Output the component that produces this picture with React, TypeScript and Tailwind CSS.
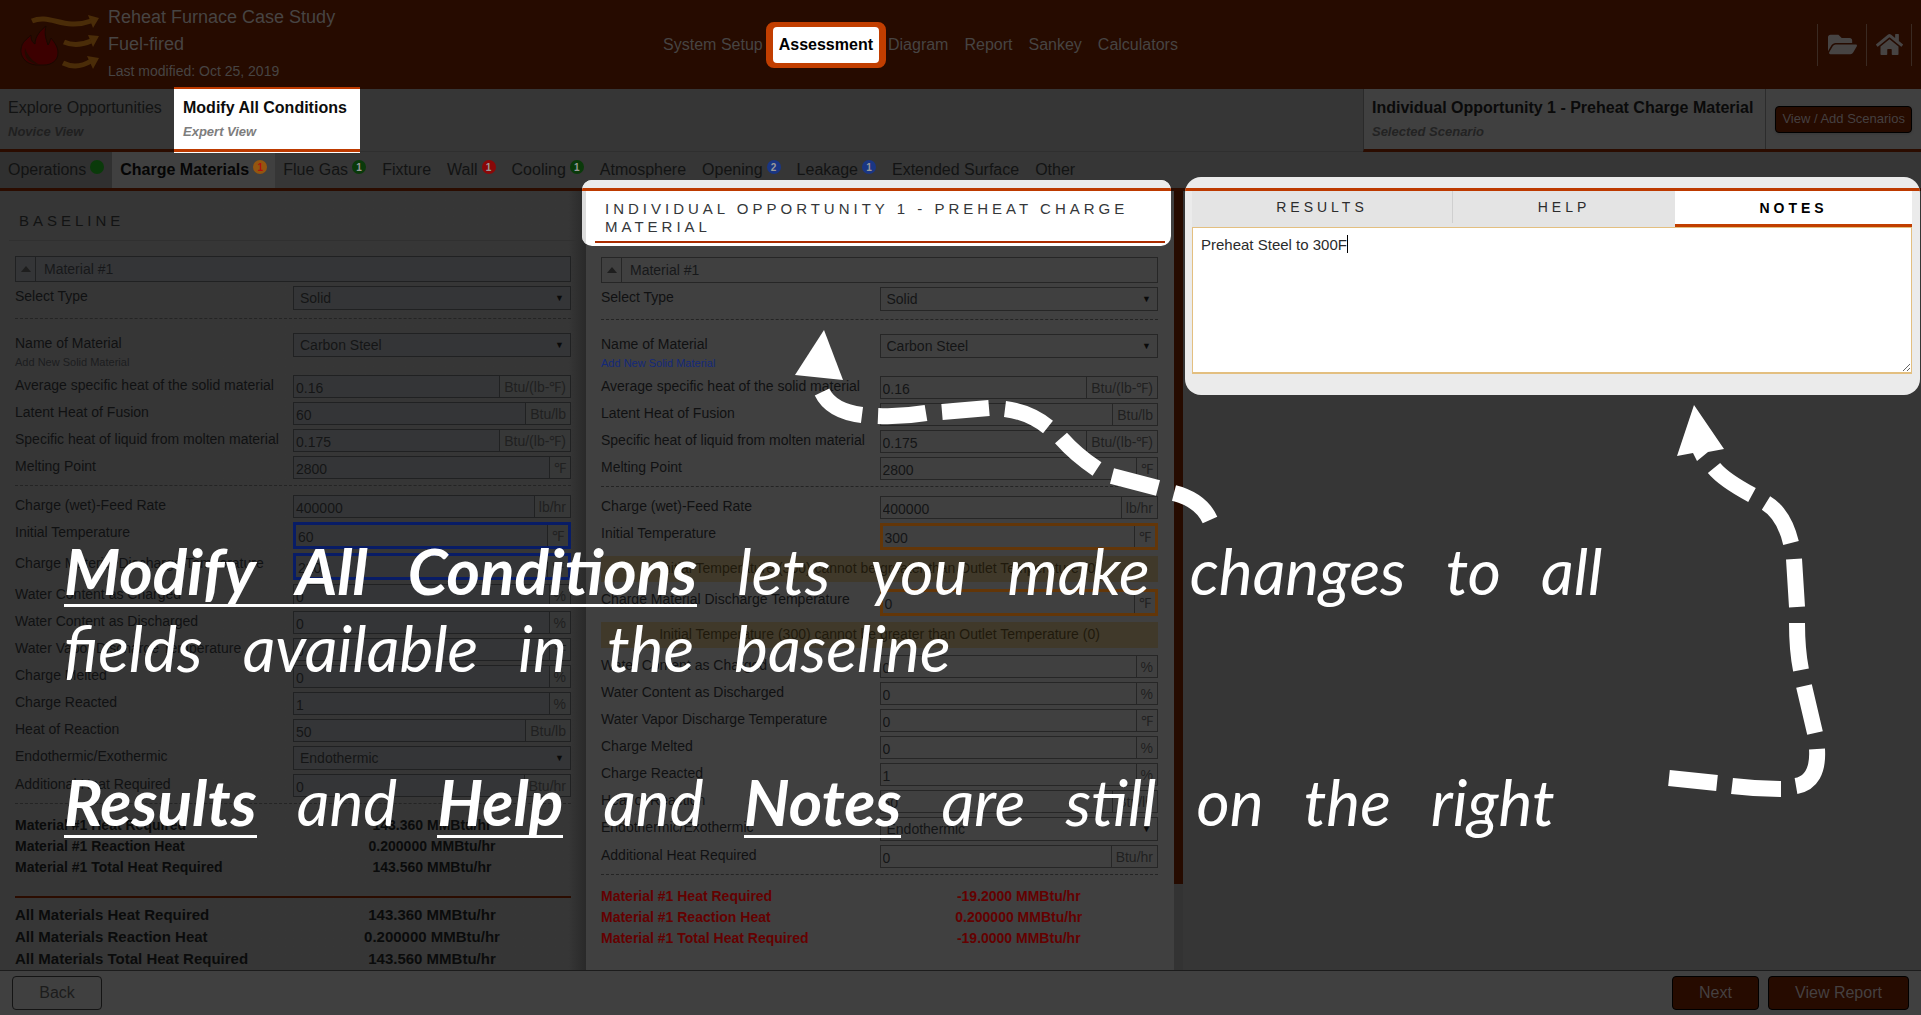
import { useId } from "react";
import type { ReactNode } from "react";
import { FaFolderOpen, FaHome } from "react-icons/fa";

type Field = {
  label: string;
  value: string;
  unit?: string;
  kind?: "select" | "input";
  link?: string;
  flagged?: boolean;
  warning?: boolean;
};

const solidFields: Field[] = [
  { label: "Name of Material", value: "Carbon Steel", kind: "select", link: "Add New Solid Material" },
  { label: "Average specific heat of the solid material", value: "0.16", unit: "Btu/(lb-℉)" },
  { label: "Latent Heat of Fusion", value: "60", unit: "Btu/lb" },
  { label: "Specific heat of liquid from molten material", value: "0.175", unit: "Btu/(lb-℉)" },
  { label: "Melting Point", value: "2800", unit: "℉" },
];

const tailFields: Field[] = [
  { label: "Water Content as Charged", value: "0", unit: "%" },
  { label: "Water Content as Discharged", value: "0", unit: "%" },
  { label: "Water Vapor Discharge Temperature", value: "0", unit: "℉" },
  { label: "Charge Melted", value: "0", unit: "%" },
  { label: "Charge Reacted", value: "1", unit: "%" },
  { label: "Heat of Reaction", value: "50", unit: "Btu/lb" },
  { label: "Endothermic/Exothermic", value: "Endothermic", kind: "select" },
  { label: "Additional Heat Required", value: "0", unit: "Btu/hr" },
];

const chargeFields = (initial: string, discharge: string, warning: boolean): Field[] => [
  { label: "Charge (wet)-Feed Rate", value: "400000", unit: "lb/hr" },
  { label: "Initial Temperature", value: initial, unit: "℉", flagged: true, warning },
  { label: "Charge Material Discharge Temperature", value: discharge, unit: "℉", flagged: true, warning },
  ...tailFields,
];

const tabs = [
  { name: "Operations", badge: " ", color: "bg-[#0a3a0a]" },
  { name: "Charge Materials", badge: "1", color: "bg-[#94560f] text-[#b01010]", active: true },
  { name: "Flue Gas", badge: "1", color: "bg-[#0a3a0a] text-[#9a9a9a]" },
  { name: "Fixture" },
  { name: "Wall", badge: "1", color: "bg-[#8a0808] text-[#9a9a9a]" },
  { name: "Cooling", badge: "1", color: "bg-[#0a3a0a] text-[#9a9a9a]" },
  { name: "Atmosphere" },
  { name: "Opening", badge: "2", color: "bg-[#1a3684] text-[#9a9a9a]" },
  { name: "Leakage", badge: "1", color: "bg-[#1a3684] text-[#9a9a9a]" },
  { name: "Extended Surface" },
  { name: "Other" },
];

function Logo() {
  return (
    <svg viewBox="0 0 110 80" className="h-20 w-[110px]" aria-hidden="true">
      <path
        d="M26 61C15 60 10 52 11 45C12 38 16 36 21 31C21 36 22 38 25 40C25 32 31 26 36 22C34 30 36 35 38 41C40 38 40 36 41 34C45 39 48 43 48 49C48 57 41 61 34 61Z"
        fill="#3c0000"
        stroke="#190800"
      />
      <path d="M15 44C13 54 20 60 30 61C24 58 18 53 15 44Z" fill="#240900" />
      <g fill="none" stroke="#4a2c08" strokeWidth="5">
        <path d="M22 17C40 9 54 27 81 17" />
        <path d="M54 38C63 42 72 41 81 37" />
        <path d="M53 59C63 64 73 62 81 57" />
      </g>
      <g fill="#4a2c08">
        <path d="M78 11L89 14L83 24Z" />
        <path d="M78 31L89 32L83 43Z" />
        <path d="M77 52L89 54L83 65Z" />
      </g>
    </svg>
  );
}

function Row({ field, baseline }: { field: Field; baseline: boolean }) {
  const id = useId();
  const line = baseline ? "border-[#202122]" : "border-[#262626]";
  const fill = baseline ? "bg-[#343537]" : "bg-[#404040]";
  const frame = field.flagged
    ? baseline
      ? "h-[27px] border-[3px] border-[#081c66]"
      : "h-[27px] border-[3px] border-[#633608]"
    : `h-[23px] border ${line}`;
  return (
    <>
      <div className="mb-1 grid grid-cols-2 items-start">
        <div className="whitespace-nowrap text-sm text-[#101112]">
          <label htmlFor={id} className="block leading-5">
            {field.label}
          </label>
          {field.link && (
            <a href="#material" className={`block text-[11px] leading-[18px] ${baseline ? "text-[#1c1d1f]" : "text-[#14297a]"}`}>
              {field.link}
            </a>
          )}
        </div>
        {field.kind === "select" ? (
          <div className={`relative h-6 border text-sm ${line} ${fill}`}>
            <select id={id} className="h-full w-full appearance-none bg-transparent px-1.5 text-[#141516]">
              <option>{field.value}</option>
            </select>
            <span className="pointer-events-none absolute inset-y-0 right-1.5 flex items-center text-[9px] text-[#0a0a0a]">▼</span>
          </div>
        ) : (
          <div className={`flex text-sm ${fill} ${frame}`}>
            <input id={id} defaultValue={field.value} className="min-w-0 flex-1 bg-transparent px-0.5 pt-0.5 text-[#141516]" />
            <span className={`flex items-center border-l px-1 text-[#202020] ${line} ${baseline ? "bg-[#373838]" : ""}`}>{field.unit}</span>
          </div>
        )}
      </div>
      {field.warning && (
        <p className="mb-[7px] mt-1.5 h-[26px] bg-[#40392a] text-center text-sm leading-[25px] text-[#1f190c]">
          Initial Temperature (300) cannot be greater than Outlet Temperature (0)
        </p>
      )}
    </>
  );
}

function Results({ rows, className }: { rows: string[][]; className: string }) {
  return (
    <dl className={`grid grid-cols-2 font-bold ${className}`}>
      {rows.map(([name, value]) => (
        <div key={name} className="contents">
          <dt>{name}</dt>
          <dd className="text-center">{value}</dd>
        </div>
      ))}
    </dl>
  );
}

function MaterialForm({ baseline, charge, results }: { baseline: boolean; charge: Field[]; results: string[] }) {
  const line = baseline ? "border-[#202122]" : "border-[#262626]";
  return (
    <form>
      <div className={`mb-1 flex h-[26px] border text-sm text-[#17181a] ${line} ${baseline ? "bg-[#343537]" : ""}`}>
        <button type="button" aria-label="Collapse material" className={`flex w-5 items-center justify-center border-r ${line}`}>
          <span className="border-x-[5px] border-b-[6px] border-x-transparent border-b-[#1e1e1e]" />
        </button>
        <span className="px-2 leading-6">Material #1</span>
      </div>
      <Row field={{ label: "Select Type", value: "Solid", kind: "select" }} baseline={baseline} />
      <hr className="mb-3.5 mt-2 border-dashed border-[#242424]" />
      {solidFields.map((f) => (
        <Row key={f.label} field={f} baseline={baseline} />
      ))}
      <hr className="mb-[9px] mt-1.5 border-dashed border-[#242424]" />
      {charge.map((f) => (
        <Row key={f.label} field={f} baseline={baseline} />
      ))}
      <hr className="mt-1.5 border-dashed border-[#242424]" />
      <Results
        className={`mt-[11px] text-sm leading-[21px] ${baseline ? "text-[#0a0b0b]" : "text-[#640000]"}`}
        rows={[
          ["Material #1 Heat Required", results[0]],
          ["Material #1 Reaction Heat", results[1]],
          ["Material #1 Total Heat Required", results[2]],
        ]}
      />
    </form>
  );
}

function Line({ children }: { children: ReactNode }) {
  return <p className="flex h-[77px] items-start gap-10 whitespace-nowrap">{children}</p>;
}

function Term({ children }: { children: ReactNode }) {
  return <strong className="flex h-[74px] gap-10 border-b-[3px] border-white font-bold">{children}</strong>;
}

function Callouts() {
  return (
    <div className="pointer-events-none absolute inset-0 z-30">
      <svg viewBox="0 0 1921 1015" className="absolute inset-0 h-full w-full" fill="none" stroke="white" strokeWidth="16" aria-hidden="true">
        <path d="M824 330L795 375L843 380Z" fill="white" stroke="none" />
        <path d="M822 392Q831 411 862 415M878 416Q902 417 926 413M942 412L989 408M1005 409Q1029 412 1048 427M1061 438Q1076 455 1097 469M1112 476L1158 488M1174 493Q1201 500 1210 520" />
        <path d="M1694 405L1724 449L1708 452L1697 461L1693 453L1677 456Z" fill="white" stroke="none" />
        <path d="M1714 468Q1724 480 1752 495M1766 503Q1784 514 1791 543M1794 559L1797 607M1797 623Q1797 650 1801 670M1804 686L1815 733M1817 749Q1819 782 1796 786M1781 789Q1757 789 1732 786M1717 783L1669 778" />
      </svg>
      <div className="absolute left-16 top-[533px] text-[64px] italic leading-[76px] text-white [font-family:'Ink_Free','Segoe_Print',Lato,sans-serif]">
        <Line>
          <Term><span>Modify</span> <span>All</span> <span>Conditions</span></Term> <span>lets</span> <span>you</span> <span>make</span> <span>changes</span> <span>to</span> <span>all</span>
        </Line>
        <Line>
          <span>fields</span> <span>available</span> <span>in</span> <span>the</span> <span>baseline</span>
        </Line>
        <div className="mt-[77px]">
          <Line>
            <Term>Results</Term> <span>and</span> <Term>Help</Term> <span>and</span> <Term>Notes</Term> <span>are</span> <span>still</span> <span>on</span> <span>the</span> <span>right</span>
          </Line>
        </div>
      </div>
    </div>
  );
}

export default function App() {
  return (
    <div className="relative flex min-h-screen flex-col overflow-hidden bg-[#363636] text-[#121313] [font-family:'Liberation_Sans',Arial,sans-serif]">
      <header className="grid h-[89px] grid-cols-[1fr_auto_1fr] items-center bg-[#260b00] text-[#474443]">
        <div className="flex pl-2.5">
          <Logo />
          <div className="-ml-3 whitespace-nowrap text-lg leading-[27px]">
            <h1>Reheat Furnace Case Study</h1>
            <p>Fuel-fired</p>
            <p className="text-sm leading-[27px]">Last modified: Oct 25, 2019</p>
          </div>
        </div>
        <nav className="mr-20 flex items-center text-base">
          <a href="#setup">System Setup</a>
          <a href="#assessment" className="ml-[3px] mr-0.5 rounded-lg border-x-[7px] border-y-[5px] border-[#c13e00] bg-[#c13e00]">
            <span className="block rounded bg-white px-1.5 py-[6px] font-bold text-black">Assessment</span>
          </a>
          <div className="flex gap-4">
            <a href="#diagram">Diagram</a>
            <a href="#report">Report</a>
            <a href="#sankey">Sankey</a>
            <a href="#calculators">Calculators</a>
          </div>
        </nav>
        <div className="mr-[9px] flex h-[42px] justify-self-end divide-x divide-[#3a2a22] border-x border-[#3a2a22]">
          <button aria-label="Open folder" className="flex w-[49px] items-center justify-center"><FaFolderOpen size={29} /></button>
          <button aria-label="Home" className="flex w-11 items-center justify-center"><FaHome size={27} /></button>
        </div>
      </header>

      <section className="flex h-[63px] whitespace-nowrap text-base">
        <button className="w-[174px] border-b-[3px] border-[#2b0c00] px-2 text-left">
          <span className="block leading-5">Explore Opportunities</span>
          <span className="mt-1.5 block text-[13px] font-bold italic leading-4 text-[#202020]">Novice View</span>
        </button>
        <button className="relative -mt-0.5 h-[66px] w-[186px] border-b border-white bg-white text-left text-[#0c0c0c]">
          <span className="flex h-full flex-col justify-center border-b-[3px] border-t-2 border-[#bd3a00] px-[9px]">
            <span className="block font-bold leading-5">Modify All Conditions</span>
            <span className="mt-1.5 block text-[13px] font-bold italic leading-4 text-[#7d7d7d]">Expert View</span>
          </span>
        </button>
        <div className="flex-1 border-b border-[#2f2f2f]" />
        <div className="flex border-b-[3px] border-l border-b-[#2b0c00] border-l-[#2a2a2a] bg-[#404040]">
          <div className="flex flex-col justify-center border-r border-[#2c2c2c] pl-2 pr-3">
            <strong className="leading-5 text-[#0a0a0a]">Individual Opportunity 1 - Preheat Charge Material</strong>
            <em className="mt-1.5 text-[13px] font-bold leading-4 text-[#232323]">Selected Scenario</em>
          </div>
          <div className="flex items-center px-[9px]">
            <button className="h-[27px] rounded-sm border border-black bg-[#260b00] px-1.5 text-[13px] text-[#454040] shadow">View / Add Scenarios</button>
          </div>
        </div>
      </section>

      <nav className="flex h-[39px] border-b-[3px] border-[#2b0c00] text-base">
        {tabs.map((t) => (
          <a
            key={t.name}
            href="#tab"
            className={`flex items-center gap-1 px-2 ${t.active ? "bg-[#404040] font-bold text-[#050505]" : t.badge === " " ? "bg-[#303030]" : ""}`}
          >
            {t.name}
            {t.badge && (
              <span className={`mb-1.5 flex size-3.5 items-center justify-center rounded-full text-[10px] font-bold ${t.color}`}>{t.badge}</span>
            )}
          </a>
        ))}
      </nav>

      <main className="grid flex-1 grid-cols-[586fr_597fr_738fr]">
        <section className="bg-linear-to-r from-[#363636] from-97% to-[#292929] pl-[15px] pr-[15px]">
          <h2 className="-mx-1.5 mb-[15px] h-[50px] border-b border-[#303030] px-2.5 pt-5 text-[15px] leading-5 tracking-[4px]">BASELINE</h2>
          <MaterialForm
            baseline
            charge={chargeFields("60", "2200", false)}
            results={["143.360 MMBtu/hr", "0.200000 MMBtu/hr", "143.560 MMBtu/hr"]}
          />
          <Results
            className="mt-[18px] border-t-2 border-[#2b0c00] pt-1.5 text-[15px] leading-[22px] text-[#0a0b0b]"
            rows={[
              ["All Materials Heat Required", "143.360 MMBtu/hr"],
              ["All Materials Reaction Heat", "0.200000 MMBtu/hr"],
              ["All Materials Total Heat Required", "143.560 MMBtu/hr"],
            ]}
          />
        </section>

        <section className="flex bg-[#404040]">
          <div className="min-w-0 flex-1">
            <div className="relative z-10 -ml-1 -mt-[11px] mb-[11px] mr-[3px] h-[66px] overflow-hidden rounded-[10px] bg-white">
              <div className="h-[11px] border-b-[3px] border-[#bd3a00] bg-[#ebebeb]" />
              <div className="flex h-[55px] flex-col border-l-4 border-[#dcdcdc] pl-[9px] pr-1.5">
                <h2 className="h-[52px] border-b-2 border-[#ab2c00] px-2.5 pt-[9px] text-[15px] leading-[18px] tracking-[4px] text-[#34373a]">
                  INDIVIDUAL OPPORTUNITY 1 - PREHEAT CHARGE MATERIAL
                </h2>
              </div>
            </div>
            <div className="pl-[15px] pr-4">
              <MaterialForm
                baseline={false}
                charge={chargeFields("300", "0", true)}
                results={["-19.2000 MMBtu/hr", "0.200000 MMBtu/hr", "-19.0000 MMBtu/hr"]}
              />
            </div>
          </div>
          <div className="w-[9px] bg-[#333333]">
            <div className="h-[89%] bg-[#260b00]" />
          </div>
        </section>

        <section className="pl-0.5">
          <div className="relative z-10 -mt-3.5 mr-px h-[218px] overflow-hidden rounded-2xl bg-[#ebebeb]">
            <div className="h-3.5 border-b-[3px] border-[#bd3a00]" />
            <div className="px-[7px] pr-2">
              <div className="grid h-9 grid-cols-[261fr_222fr_237fr] bg-[#e4e4e4] text-sm tracking-[4px] text-[#2c2c2c]">
                <button className="mb-1 border-r border-[#cfcfcf]">RESULTS</button>
                <button className="mb-1">HELP</button>
                <button className="border-b-[3px] border-[#c13e00] bg-white font-bold text-black">NOTES</button>
              </div>
              <div className="relative">
                <textarea
                  aria-label="Notes"
                  defaultValue="Preheat Steel to 300F"
                  className="block h-[147px] w-full resize-y border border-b-2 border-[#e3bf80] bg-white px-2 py-2 text-[15px] leading-[18px] text-[#2b2b2b]"
                />
                <span className="absolute left-[155px] top-2 h-[18px] w-px bg-black" />
              </div>
            </div>
          </div>
        </section>
      </main>

      <footer className="relative z-10 flex h-[45px] items-center gap-[9px] border-t border-[#1c1c1c] bg-[#404040] pl-3 pr-3 text-base">
        <button className="h-[34px] w-[90px] rounded-sm border border-[#141414] text-[#1c1c1c]">Back</button>
        <span className="flex-1" />
        <button className="h-[34px] w-[87px] rounded-sm border border-black bg-[#260b00] text-[#454040]">Next</button>
        <button className="h-[34px] w-[141px] rounded-sm border border-black bg-[#260b00] text-[#454040]">View Report</button>
      </footer>
      <Callouts />
    </div>
  );
}
